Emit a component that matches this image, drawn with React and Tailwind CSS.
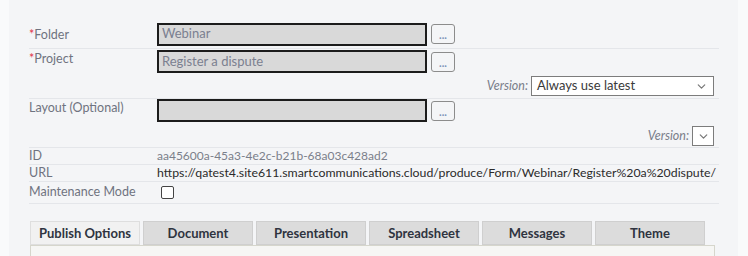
import { ChevronDown } from 'lucide-react';

const font = { fontFamily: 'Lato, "Liberation Sans", sans-serif' };

function Picker({ value }) {
  return (
    <div className="flex items-center gap-1">
      <div className="w-[270px] h-[23px] bg-[#d9d9d9] border-2 border-[#1c1c1c] px-[3px] flex items-center text-[13px] text-[#7b8090]">
        {value}
      </div>
      <button className="w-[24px] h-[20px] border border-[#8c8c8c] rounded-[3px] bg-[#f4f5f7] flex items-end justify-center pb-[3px] text-[11px] leading-none text-[#7b93b8] font-bold">
        ...
      </button>
    </div>
  );
}

function Label({ text, required, className = '' }) {
  return (
    <div className={'w-[128px] shrink-0 text-[12.5px] text-[#6f7380] ' + className}>
      {required && <span className="text-[#e0344a]">*</span>}
      {text}
    </div>
  );
}

function Version({ value, small }) {
  return (
    <div className="flex justify-end items-center gap-[3px] pr-[5px]">
      <span className="italic text-[12.5px] text-[#7a7e8a]">Version:</span>
      <div className={(small ? 'w-[22px] justify-center' : 'w-[183px] justify-between px-[5px]') + ' h-[20px] bg-white border border-[#7c7c7c] flex items-center text-[13px] text-[#3a3a3a]'}>
        {!small && <span>{value}</span>}
        <ChevronDown className="w-[13px] h-[13px] text-[#777]" strokeWidth={2.2} />
      </div>
    </div>
  );
}

const tabs = ['Publish Options', 'Document', 'Presentation', 'Spreadsheet', 'Messages', 'Theme'];

export default function App() {
  return (
    <div className="w-[748px] h-[256px] bg-[#f9fafb] flex overflow-hidden" style={font}>
      <div className="ml-[9px] w-[729px] h-full bg-[#f4f5f7] pl-[20px] pr-[19px] pt-[20px]">
        <div className="h-[29px] flex border-b border-[#e4e6ea]">
          <Label text="Folder" required className="pt-[6px]" />
          <Picker value="Webinar" />
        </div>
        <div className="h-[50px] flex flex-col border-b border-[#e4e6ea] pt-[1px]">
          <div className="flex">
            <Label text="Project" required />
            <Picker value="Register a dispute" />
          </div>
          <div className="mt-[3px]">
            <Version value="Always use latest" />
          </div>
        </div>
        <div className="h-[49px] flex flex-col border-b border-[#e4e6ea]">
          <div className="flex">
            <Label text="Layout (Optional)" />
            <Picker value="" />
          </div>
          <div className="mt-[4px]">
            <Version small />
          </div>
        </div>
        <div className="h-[17px] flex items-center border-b border-[#e4e6ea]">
          <Label text="ID" />
          <span className="text-[12px] text-[#7b7f8a] whitespace-nowrap">aa45600a-45a3-4e2c-b21b-68a03c428ad2</span>
        </div>
        <div className="h-[17px] flex items-center border-b border-[#e4e6ea]">
          <Label text="URL" />
          <span className="text-[12.3px] text-[#2b2b2b] whitespace-nowrap">https://qatest4.site611.smartcommunications.cloud/produce/Form/Webinar/Register%20a%20dispute/</span>
        </div>
        <div className="h-[22px] flex items-start border-b border-[#e4e6ea]">
          <Label text="Maintenance Mode" className="pt-[1px]" />
          <div className="ml-[4px] mt-[4px] w-[13px] h-[13px] border border-[#444] rounded-[2px] bg-white" />
        </div>
        <div className="mt-[17px] ml-[1px] flex gap-[3px]">
          {tabs.map((t, i) => (
            <div
              key={t}
              className={(i === 0 ? 'bg-[#f1f1f1] border-[#dedede]' : 'bg-[#dcdcdc] border-[#cfcfcf]') + ' w-[110px] h-[24px] border flex items-center justify-center pt-[1px] text-[13px] font-bold text-[#2f3440]'}
            >
              {t}
            </div>
          ))}
        </div>
        <div className="ml-[1px] w-[685px] h-[20px] border border-[#d6d6cc] bg-[#f6f6f4]" />
      </div>
    </div>
  );
}
